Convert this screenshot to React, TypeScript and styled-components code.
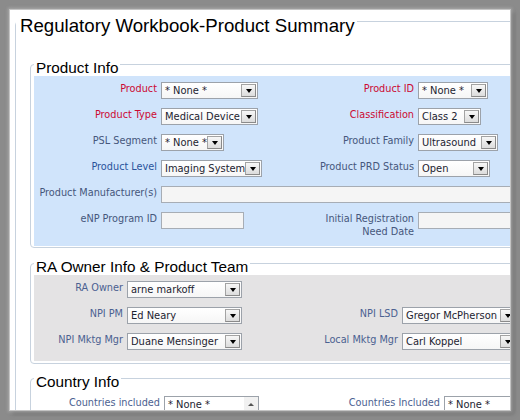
import React from 'react';
import styled, { createGlobalStyle } from 'styled-components';

const Global = createGlobalStyle`
  html, body { margin: 0; padding: 0; }
  body {
    background: #8b8b8b;
    width: 520px;
    height: 420px;
    overflow: hidden;
    font-family: "DejaVu Sans Condensed", "DejaVu Sans", sans-serif;
    font-stretch: condensed;
  }
`;

const Frame = styled.div`
  box-sizing: border-box;
  width: 520px;
  height: 420px;
  padding: 10px;
`;

const Panel = styled.div`
  width: 500px;
  height: 400px;
  background: #fff;
  overflow: hidden;
  box-shadow: 0 0 0 1px #c4c4c4, 0 0 3px 2px #a9a9a9, 3px 3px 4px 1px #6e6e6e;
`;

const Workbook = styled.fieldset`
  box-sizing: border-box;
  width: 580px;
  min-width: 0;
  margin: -3px 0 0 5px;
  padding: 0;
  border: 1px solid #c7d2de;
  border-radius: 4px;
`;

const Title = styled.legend`
  font-family: "Liberation Sans", Arial, sans-serif;
  font-stretch: normal;
  font-size: 18.67px;
  line-height: 21px;
  padding: 8px 2px 0 4px;
  color: #000;
`;

const Section = styled.fieldset<{ $top: number; $bottom: number }>`
  min-width: 0;
  margin: ${p => p.$top}px 0 0 14px;
  padding: 0 0 ${p => p.$bottom}px 3px;
  border: 1px solid #c7d2de;
  border-radius: 4px;
`;

const SectionTitle = styled.legend`
  font-family: "Liberation Sans", Arial, sans-serif;
  font-stretch: normal;
  font-size: 15.3px;
  line-height: 17px;
  padding: 5px 2px 0;
  color: #000;
`;

const Area = styled.div<{ $bg?: string; $pad: string }>`
  display: flex;
  flex-direction: column;
  gap: 9px;
  background: ${p => p.$bg ?? 'transparent'};
  padding: ${p => p.$pad};
`;

const Row = styled.div<{ $cols: string }>`
  display: grid;
  grid-template-columns: ${p => p.$cols};
  column-gap: 4px;
  align-items: start;
  justify-items: start;
`;

type Tone = 'req' | 'std' | 'key' | 'team';
const toneColor: Record<Tone, string> = {
  req: '#cc0a33',
  std: '#46577b',
  key: '#2a539b',
  team: '#4b6191',
};

const Label = styled.label<{ $tone?: Tone }>`
  justify-self: end;
  font-size: 10.8px;
  line-height: 13px;
  text-align: right;
  white-space: nowrap;
  color: ${p => toneColor[p.$tone ?? 'std']};
`;

const SelectBox = styled.div<{ $w: number }>`
  box-sizing: border-box;
  width: ${p => p.$w}px;
  height: 17px;
  display: flex;
  align-items: center;
  justify-content: space-between;
  padding: 0 1px 0 3px;
  border: 1px solid #9ca2aa;
  background: linear-gradient(#ffffff, #f6f6f6);
  font-size: 11px;
  line-height: 13px;
  color: #1c2330;
  white-space: nowrap;
  overflow: hidden;
`;

const DropButton = styled.span`
  flex: none;
  box-sizing: border-box;
  width: 15px;
  height: 13px;
  display: flex;
  align-items: center;
  justify-content: center;
  border: 1px solid #a3a3a3;
  border-right-color: #8a8a8a;
  border-bottom-color: #8a8a8a;
  background: linear-gradient(#f7f7f7, #dcdcdc);
  &::after {
    content: '';
    margin-top: 1px;
    border-left: 3.5px solid transparent;
    border-right: 3.5px solid transparent;
    border-top: 4px solid #000;
  }
`;

const TextBox = styled.div<{ $w: number; $span?: boolean }>`
  box-sizing: border-box;
  width: ${p => p.$w}px;
  height: 17px;
  border: 1px solid #a7adb5;
  background: #f5f5f5;
  grid-column: ${p => (p.$span ? '2 / -1' : 'auto')};
`;

const ListBox = styled.div<{ $w: number }>`
  box-sizing: border-box;
  width: ${p => p.$w}px;
  height: 44px;
  display: flex;
  border: 1px solid #9ca2aa;
  background: #fff;
`;

const ListText = styled.span`
  flex: 1;
  padding: 1px 3px 0;
  font-size: 11px;
  line-height: 13px;
  color: #1c2330;
  white-space: nowrap;
`;

const ScrollTrack = styled.div`
  width: 14px;
  background: #f3f3f3;
  display: flex;
  flex-direction: column;
`;

const ScrollUp = styled.span`
  height: 14px;
  display: flex;
  align-items: center;
  justify-content: center;
  background: #f1f1f1;
  &::after {
    content: '';
    border-left: 3px solid transparent;
    border-right: 3px solid transparent;
    border-bottom: 3px solid #555;
  }
`;

const Select = ({ w, value }: { w: number; value: string }) => (
  <SelectBox $w={w} role="combobox">
    <span>{value}</span>
    <DropButton />
  </SelectBox>
);

const productCols = '123px 135px 114px 150px';
const teamCols = '89px 115px 152px 115px';
const countryCols = '126px 95px 177px 150px';

export default function App() {
  return (
    <>
      <Global />
      <Frame>
        <Panel>
          <Workbook>
            <Title>Regulatory Workbook-Product Summary</Title>

            <Section $top={17.5} $bottom={1}>
              <SectionTitle>Product Info</SectionTitle>
              <Area $bg="#d0e4fb" $pad="6.5px 0 8px 0">
                <Row $cols={productCols}>
                  <Label $tone="req">Product</Label>
                  <Select w={97} value="* None *" />
                  <Label $tone="req">Product ID</Label>
                  <Select w={70} value="* None *" />
                </Row>
                <Row $cols={productCols}>
                  <Label $tone="req">Product Type</Label>
                  <Select w={97} value="Medical Device" />
                  <Label $tone="req">Classification</Label>
                  <Select w={63} value="Class 2" />
                </Row>
                <Row $cols={productCols}>
                  <Label>PSL Segment</Label>
                  <Select w={63} value="* None *" />
                  <Label>Product Family</Label>
                  <Select w={80} value="Ultrasound" />
                </Row>
                <Row $cols={productCols}>
                  <Label $tone="key">Product Level</Label>
                  <Select w={101} value="Imaging System" />
                  <Label>Product PRD Status</Label>
                  <Select w={72} value="Open" />
                </Row>
                <Row $cols={productCols}>
                  <Label>Product Manufacturer(s)</Label>
                  <TextBox $w={400} $span />
                </Row>
                <Row $cols={productCols}>
                  <Label>eNP Program ID</Label>
                  <TextBox $w={83} />
                  <Label>
                    Initial Registration
                    <br />
                    Need Date
                  </Label>
                  <TextBox $w={120} />
                </Row>
              </Area>
            </Section>

            <Section $top={4.5} $bottom={2}>
              <SectionTitle>RA Owner Info &amp; Product Team</SectionTitle>
              <Area $bg="#e4e3e4" $pad="6.5px 0 11px 0">
                <Row $cols={teamCols}>
                  <Label $tone="team">RA Owner</Label>
                  <Select w={115} value="arne markoff" />
                </Row>
                <Row $cols={teamCols}>
                  <Label $tone="team">NPI PM</Label>
                  <Select w={115} value="Ed Neary" />
                  <Label $tone="team">NPI LSD</Label>
                  <Select w={115} value="Gregor McPherson" />
                </Row>
                <Row $cols={teamCols}>
                  <Label $tone="team">NPI Mktg Mgr</Label>
                  <Select w={115} value="Duane Mensinger" />
                  <Label $tone="team">Local Mktg Mgr</Label>
                  <Select w={115} value="Carl Koppel" />
                </Row>
              </Area>
            </Section>

            <Section $top={3.5} $bottom={2}>
              <SectionTitle>Country Info</SectionTitle>
              <Area $pad="6.5px 0 10px 0">
                <Row $cols={countryCols}>
                  <Label $tone="team">Countries included</Label>
                  <ListBox $w={95}>
                    <ListText>* None *</ListText>
                    <ScrollTrack>
                      <ScrollUp />
                    </ScrollTrack>
                  </ListBox>
                  <Label $tone="team">Countries Included</Label>
                  <ListBox $w={150}>
                    <ListText>* None *</ListText>
                  </ListBox>
                </Row>
              </Area>
            </Section>
          </Workbook>
        </Panel>
      </Frame>
    </>
  );
}
